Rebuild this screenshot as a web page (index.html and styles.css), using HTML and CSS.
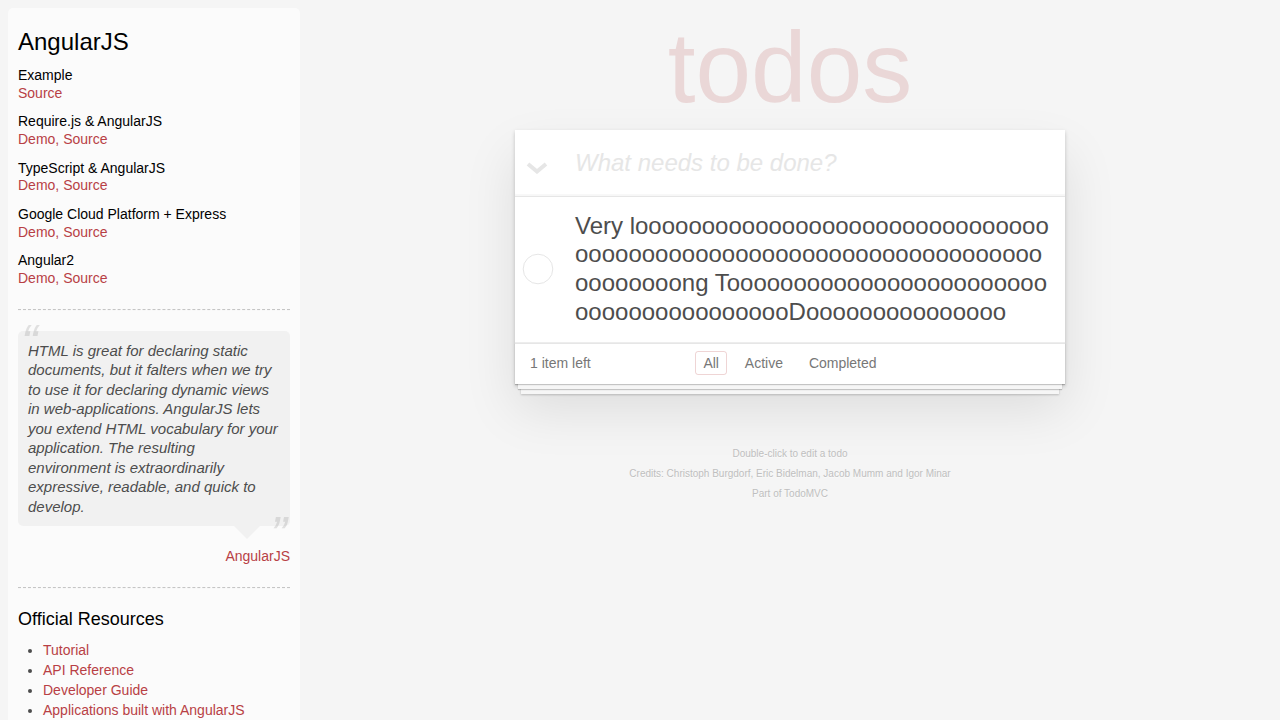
FILE: index.html
```
<!DOCTYPE html>
<html lang="en">
<head>
<meta charset="utf-8">
<title>AngularJS • TodoMVC</title>
<link rel="stylesheet" href="styles.css">
</head>
<body>
<div class="page">
  <aside class="learn">
    <header>
      <h3 class="learn-title">AngularJS</h3>
      <div class="source-group">
        <h5>Example</h5>
        <div class="links"><a href="#">Source</a></div>
      </div>
      <div class="source-group">
        <h5>Require.js &amp; AngularJS</h5>
        <div class="links"><a href="#">Demo</a><span class="sep">,</span> <a href="#">Source</a></div>
      </div>
      <div class="source-group">
        <h5>TypeScript &amp; AngularJS</h5>
        <div class="links"><a href="#">Demo</a><span class="sep">,</span> <a href="#">Source</a></div>
      </div>
      <div class="source-group">
        <h5>Google Cloud Platform + Express</h5>
        <div class="links"><a href="#">Demo</a><span class="sep">,</span> <a href="#">Source</a></div>
      </div>
      <div class="source-group">
        <h5>Angular2</h5>
        <div class="links"><a href="#">Demo</a><span class="sep">,</span> <a href="#">Source</a></div>
      </div>
    </header>
    <hr class="learn-rule">
    <div class="quote">
      <blockquote class="speech-bubble">
        <p>HTML is great for declaring static documents, but it falters when we try to use it for declaring dynamic views in web-applications. AngularJS lets you extend HTML vocabulary for your application. The resulting environment is extraordinarily expressive, readable, and quick to develop.</p>
      </blockquote>
      <footer class="quote-footer"><a href="#">AngularJS</a></footer>
    </div>
    <hr class="learn-rule">
    <h4 class="learn-sub">Official Resources</h4>
    <ul class="learn-list">
      <li><a href="#">Tutorial</a></li>
      <li><a href="#">API Reference</a></li>
      <li><a href="#">Developer Guide</a></li>
      <li><a href="#">Applications built with AngularJS</a></li>
      <li><a href="#">Blog</a></li>
      <li><a href="#">FAQ</a></li>
      <li><a href="#">AngularJS Meetups</a></li>
    </ul>
    <h4 class="learn-sub">Articles and Guides</h4>
    <ul class="learn-list">
      <li><a href="#">Code School AngularJS course</a></li>
      <li><a href="#">5 Awesome AngularJS Features</a></li>
      <li><a href="#">Using Yeoman with AngularJS</a></li>
      <li><a href="#">me&amp;ngular - an introduction to MVW</a></li>
    </ul>
    <h4 class="learn-sub">Community</h4>
    <ul class="learn-list">
      <li><a href="#">Walkthroughs and Tutorials on YouTube</a></li>
      <li><a href="#">Google Groups mailing list</a></li>
      <li><a href="#">angularjs on Stack Overflow</a></li>
      <li><a href="#">AngularJS on Twitter</a></li>
      <li><a href="#">AngularjS on Google +</a></li>
    </ul>
    <footer class="learn-footer">
      <hr class="learn-rule">
      <em>If you have other helpful links to share, or find any of the links above no longer work, please <a href="#">let us know</a>.</em>
    </footer>
  </aside>

  <main class="app-column">
    <h1 class="app-title">todos</h1>
    <section class="todoapp">
      <header class="app-header">
        <label class="toggle-all" for="toggle-all">
          <svg width="22" height="12" viewBox="0 0 22 12" aria-hidden="true"><polyline points="2,2 11,9.5 20,2" fill="none" stroke="#e6e6e6" stroke-width="4" stroke-linejoin="miter"/></svg>
        </label>
        <input id="toggle-all" class="toggle-all-input" type="checkbox">
        <input class="new-todo" placeholder="What needs to be done?">
      </header>
      <section class="main">
        <ul class="todo-list">
          <li class="todo-item">
            <span class="toggle">
              <svg width="40" height="40" viewBox="0 0 40 40" aria-hidden="true"><circle cx="23" cy="20" r="14.8" fill="none" stroke="#e6e6e6" stroke-width="1"/></svg>
            </span>
            <label class="todo-label">Very loooooooooooooooooooooooooooooooooooooooooooooooooooooooooooooooooooooooooong TooooooooooooooooooooooooooooooooooooooooDooooooooooooooo</label>
          </li>
        </ul>
      </section>
      <footer class="app-footer">
        <span class="todo-count"><strong>1</strong> item left</span>
        <ul class="filters">
          <li><a class="selected" href="#/">All</a></li>
          <li><a href="#/active">Active</a></li>
          <li><a href="#/completed">Completed</a></li>
        </ul>
        <span class="spacer"></span>
      </footer>
    </section>
    <footer class="info">
      <p>Double-click to edit a todo</p>
      <p>Credits: <a href="#">Christoph Burgdorf</a>, <a href="#">Eric Bidelman</a>, <a href="#">Jacob Mumm</a> and <a href="#">Igor Minar</a></p>
      <p>Part of <a href="#">TodoMVC</a></p>
    </footer>
  </main>
</div>
</body>
</html>
```
FILE: styles.css
```
html, body {
  margin: 0;
  padding: 0;
}

body {
  font: 14px "Liberation Sans", Arial, Helvetica, sans-serif;
  line-height: 1.4em;
  background: #f5f5f5;
  color: #4d4d4d;
}

.page {
  display: flex;
  align-items: flex-start;
}

/* ---------- Learn sidebar ---------- */
.learn {
  flex: none;
  width: 272px;
  margin: 8px 0 0 8px;
  padding: 10px;
  border-radius: 5px;
  background-color: rgba(255, 255, 255, 0.6);
}

.learn a {
  color: #b83f45;
  text-decoration: none;
  font-weight: normal;
}

.learn .sep {
  color: #b83f45;
}

.learn-title,
.learn-sub,
.source-group h5 {
  font-weight: 500;
  line-height: 1.2;
  color: #000;
}

.learn-title {
  font-size: 24px;
  margin: 10px 0;
}

.learn-sub {
  font-size: 18px;
  margin: 10px 0;
}

.source-group h5 {
  font-size: 14px;
  margin: 10px 0 0;
}

.learn-rule {
  margin: 20px 0;
  border: 0;
  border-top: 1px dashed #c5c5c5;
  border-bottom: 1px dashed #f7f7f7;
}

.quote {
  margin: 20px 0;
}

.speech-bubble {
  position: relative;
  margin: 0;
  padding: 10px;
  background: rgba(0, 0, 0, 0.04);
  border-radius: 5px;
}

.speech-bubble p {
  margin: 0;
  font-size: 15px;
  line-height: 1.3;
  font-style: italic;
}

.speech-bubble p::before {
  content: "\201C";
  font-size: 50px;
  opacity: 0.15;
  position: absolute;
  top: -20px;
  left: 3px;
}

.speech-bubble p::after {
  content: "\201D";
  font-size: 50px;
  opacity: 0.15;
  position: absolute;
  bottom: -42px;
  right: 3px;
}

.speech-bubble::after {
  content: "";
  position: absolute;
  top: 100%;
  right: 30px;
  border: 13px solid transparent;
  border-top-color: rgba(0, 0, 0, 0.04);
}

.quote-footer {
  margin-top: 20.2px;
  text-align: right;
}

.quote-footer a {
  margin-left: 5px;
  vertical-align: middle;
}

.learn-list {
  padding: 0;
  margin: 0 0 30px 25px;
}

.learn-list li {
  line-height: 20px;
}

.learn-footer {
  font-size: 14px;
}

/* ---------- App column ---------- */
.app-column {
  flex: none;
  width: 550px;
  margin: 0 auto;
}

.app-title {
  margin: 0;
  height: 130px;
  line-height: 135px;
  font-size: 100px;
  font-weight: 100;
  text-align: center;
  color: rgba(175, 47, 47, 0.15);
}

.todoapp {
  background: #fff;
  margin: 0 0 40px 0;
  box-shadow: 0 2px 4px 0 rgba(0, 0, 0, 0.2), 0 25px 50px 0 rgba(0, 0, 0, 0.1);
}

.app-header {
  display: flex;
  box-shadow: inset 0 -2px 1px rgba(0, 0, 0, 0.03);
}

.toggle-all {
  flex: none;
  width: 60px;
  box-sizing: border-box;
  padding: 32px 0 0 11px;
}

.toggle-all svg {
  display: block;
}

.toggle-all-input {
  display: none;
}

.new-todo {
  flex: 1;
  min-width: 0;
  margin: 0;
  padding: 16px 16px 16px 0;
  border: none;
  background: transparent;
  font-family: inherit;
  font-size: 24px;
  line-height: 1.4em;
  color: inherit;
  outline: none;
}

.new-todo::placeholder {
  font-style: italic;
  font-weight: 300;
  color: #e6e6e6;
}

.main {
  border-top: 1px solid #e6e6e6;
}

.todo-list {
  margin: 0;
  padding: 0;
  list-style: none;
}

.todo-item {
  display: flex;
  align-items: center;
  border-bottom: 1px solid #ededed;
  font-size: 24px;
}

.toggle {
  flex: none;
  width: 40px;
  height: 40px;
}

.toggle svg {
  display: block;
}

.todo-label {
  flex: 1;
  min-width: 0;
  padding: 15px 14px 15px 20px;
  line-height: 1.2;
  word-break: break-all;
}

.app-footer {
  display: grid;
  grid-template-columns: 1fr auto 1fr;
  color: #777;
  padding: 10px 15px;
  height: 20px;
  border-top: 1px solid #e6e6e6;
  box-shadow: 0 1px 1px rgba(0, 0, 0, 0.2),
              0 8px 0 -3px #f6f6f6,
              0 9px 1px -3px rgba(0, 0, 0, 0.2),
              0 16px 0 -6px #f6f6f6,
              0 17px 2px -6px rgba(0, 0, 0, 0.2);
}

.todo-count {
  text-align: left;
}

.todo-count strong {
  font-weight: 300;
}

.filters {
  margin: 0;
  padding: 0;
  list-style: none;
}

.filters li {
  display: inline;
}

.filters a {
  color: inherit;
  margin: 3px;
  padding: 3px 7px;
  text-decoration: none;
  border: 1px solid transparent;
  border-radius: 3px;
}

.filters a.selected {
  border-color: rgba(175, 47, 47, 0.2);
}

.info {
  margin: 65px auto 0;
  color: #bfbfbf;
  font-size: 10px;
  text-shadow: 0 1px 0 rgba(255, 255, 255, 0.5);
  text-align: center;
}

.info p {
  line-height: 1;
  margin: 9px 0 10px;
}

.info a {
  color: inherit;
  text-decoration: none;
  font-weight: 400;
}
```
